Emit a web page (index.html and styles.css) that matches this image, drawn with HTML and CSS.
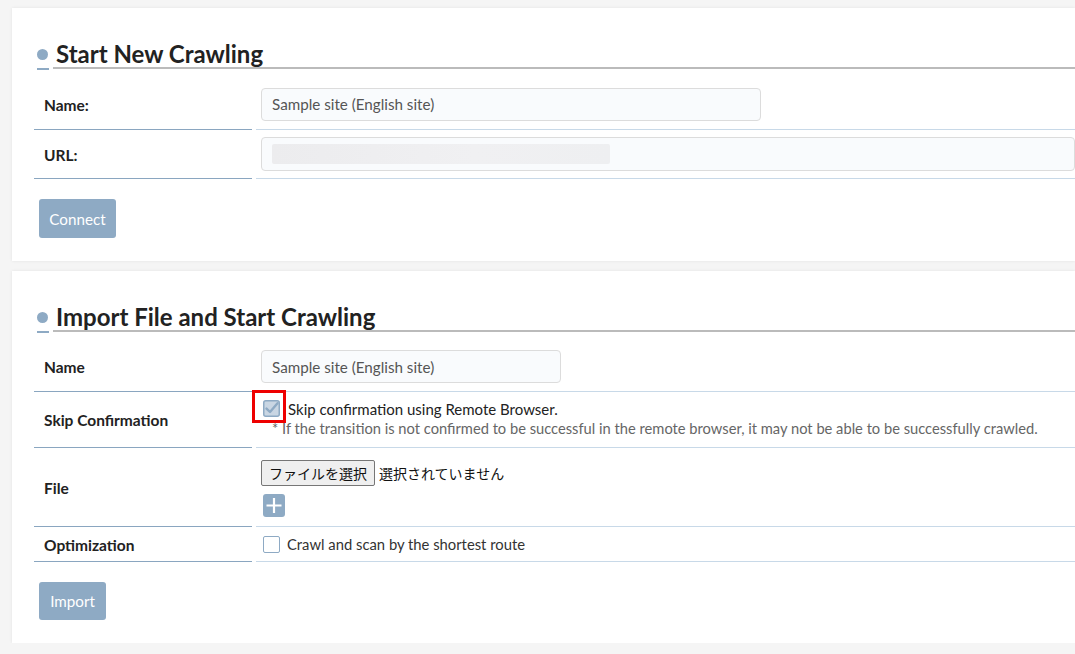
FILE: index.html
```html
<!DOCTYPE html>
<html lang="ja">
<head>
<meta charset="utf-8">
<link rel="stylesheet" href="styles.css">
</head>
<body>
<div class="page">
  <section class="card card-first">
    <h2 class="title"><span class="dot"></span><span class="title-text">Start New Crawling</span></h2>
    <div class="form form-connect">
      <div class="label">Name:</div>
      <div class="value"><div class="input input-half">Sample site (English site)</div></div>
      <div class="label">URL:</div>
      <div class="value"><div class="input input-full"><span class="blur"></span></div></div>
    </div>
    <div class="actions"><span class="btn btn-connect">Connect</span></div>
  </section>

  <section class="card card-second">
    <h2 class="title"><span class="dot"></span><span class="title-text">Import File and Start Crawling</span></h2>
    <div class="form form-import">
      <div class="label">Name</div>
      <div class="value"><div class="input input-small">Sample site (English site)</div></div>

      <div class="label">Skip Confirmation</div>
      <div class="value value-stack">
        <div class="skip-line">
          <span class="check-wrap">
            <svg class="check" width="17" height="17" viewBox="0 0 17 17">
              <rect x="0.75" y="0.75" width="15.5" height="15.5" rx="2" fill="#c9d6e3" stroke="#8eaac4" stroke-width="1.5"/>
              <path d="M3.5 8.6 L7 12 L14.5 3.2" fill="none" stroke="#8eaac4" stroke-width="2.4" stroke-linecap="round" stroke-linejoin="round"/>
            </svg>
            <span class="highlight"></span>
          </span>
          <span class="skip-text">Skip confirmation using Remote Browser.</span>
        </div>
        <div class="note">* If the transition is not confirmed to be successful in the remote browser, it may not be able to be successfully crawled.</div>
      </div>

      <div class="label">File</div>
      <div class="value value-stack">
        <div class="file-line"><span class="file-btn">ファイルを選択</span><span class="file-status">選択されていません</span></div>
        <span class="plus">
          <svg width="22" height="23" viewBox="0 0 22 23"><path d="M11 4 V19 M3.5 11.5 H18.5" stroke="#fff" stroke-width="2.2"/></svg>
        </span>
      </div>

      <div class="label">Optimization</div>
      <div class="value">
        <span class="box"></span><span class="opt-text">Crawl and scan by the shortest route</span>
      </div>
    </div>
    <div class="actions"><span class="btn btn-import">Import</span></div>
  </section>
</div>
</body>
</html>
```

FILE: styles.css
```css
html, body {
  margin: 0;
  padding: 0;
  overflow: hidden;
  background: #f5f5f5;
  font-family: "Lato", "Noto Sans CJK JP", sans-serif;
  color: #222;
}
.page {
  padding: 8px 0 0 12px;
  display: flex;
  flex-direction: column;
  gap: 10px;
}
.card {
  background: #fff;
  box-shadow: 0 0 3px rgba(0,0,0,0.08);
  padding: 0 0 0 22px;
}
.card-first { height: 253px; }
.card-second { height: 372px; }

.title {
  position: relative;
  margin: 0;
  padding-top: 31px;
  display: flex;
  align-items: flex-end;
  height: 29px;
  margin-left: 3px;
}
.dot {
  width: 11px;
  height: 11px;
  border-radius: 50%;
  background: #8eaac4;
  margin-bottom: 8px;
  flex: none;
}
.title::before {
  content: "";
  position: absolute;
  left: 0;
  bottom: -2px;
  width: 12px;
  height: 2px;
  background: #8eaac4;
}
.title::after {
  content: "";
  position: absolute;
  left: 16px;
  right: 0;
  bottom: -1px;
  height: 2px;
  background: #bbbbbb;
}
.title-text {
  margin-left: 8px;
  font-size: 24px;
  font-weight: 700;
  line-height: 29px;
  color: #222;
}

.form {
  display: grid;
  grid-template-columns: 218px 1fr;
  column-gap: 4px;
  margin-top: 11px;
}
.form-connect { grid-template-rows: 51px 49px; }
.form-import { grid-template-rows: 50px 56px 79px 35px; }
.label {
  box-sizing: border-box;
  border-bottom: 1px solid #8aa6c0;
  padding-left: 10px;
  padding-top: 1px;
  font-size: 15.5px;
  font-weight: 700;
  display: flex;
  align-items: center;
}
.value {
  box-sizing: border-box;
  border-bottom: 1px solid #c8d9e8;
  padding-left: 5px;
  display: flex;
  align-items: center;
}
.value-stack {
  flex-direction: column;
  align-items: flex-start;
  justify-content: flex-start;
}

.input {
  box-sizing: border-box;
  height: 33px;
  background: #f9fbfd;
  border: 1px solid #dcdcdc;
  border-radius: 4px;
  padding-left: 10px;
  font-size: 15.2px;
  color: #555;
  display: flex;
  align-items: center;
}
.input-half { width: 500px; }
.input-full { flex: 1; height: 34px; }
.input-small { width: 300px; }
.blur {
  width: 338px;
  height: 20px;
  background: linear-gradient(90deg, #ececee, #f0f0f2 60%, #eeeff1);
  border-radius: 2px;
}

.actions { padding-top: 20px; padding-left: 5px; }
.btn {
  display: inline-flex;
  align-items: center;
  justify-content: center;
  background: #8eaac4;
  color: #fff;
  border-radius: 3px;
  font-size: 15.2px;
}
.btn-connect { width: 77px; height: 39px; }
.btn-import { width: 67px; height: 38px; }

.skip-line {
  display: flex;
  align-items: center;
  margin-top: 7px;
  padding-left: 2px;
}
.check-wrap { position: relative; display: inline-flex; }
.check { display: block; }
.highlight {
  position: absolute;
  left: -11px;
  top: -10px;
  width: 28px;
  height: 27px;
  border: 3px solid #ee0000;
}
.skip-text {
  margin-left: 8px;
  font-size: 15px;
  color: #222;
  margin-top: 1px;
}
.note {
  font-size: 14.7px;
  color: #666;
  margin-left: 11px;
  margin-top: 1px;
  white-space: nowrap;
}

.file-line {
  display: flex;
  align-items: center;
  margin-top: 12px;
}
.file-btn {
  box-sizing: border-box;
  height: 26px;
  width: 114px;
  border: 1px solid #767676;
  border-radius: 2px;
  background: #efefef;
  font-family: "Noto Sans CJK JP", sans-serif;
  font-size: 14px;
  display: flex;
  align-items: center;
  justify-content: center;
  color: #111;
}
.file-status {
  font-family: "Noto Sans CJK JP", sans-serif;
  font-size: 14px;
  margin-left: 4px;
  color: #111;
}
.plus {
  margin-top: 8px;
  margin-left: 2px;
  width: 22px;
  height: 23px;
  background: #8eaac4;
  border-radius: 3px;
  display: block;
}
.plus svg { display: block; }

.box {
  box-sizing: border-box;
  width: 17px;
  height: 17px;
  border: 1.5px solid #8eaac4;
  border-radius: 2px;
  margin-left: 2px;
}
.opt-text {
  margin-left: 7px;
  font-size: 14.8px;
  color: #333;
}
```
